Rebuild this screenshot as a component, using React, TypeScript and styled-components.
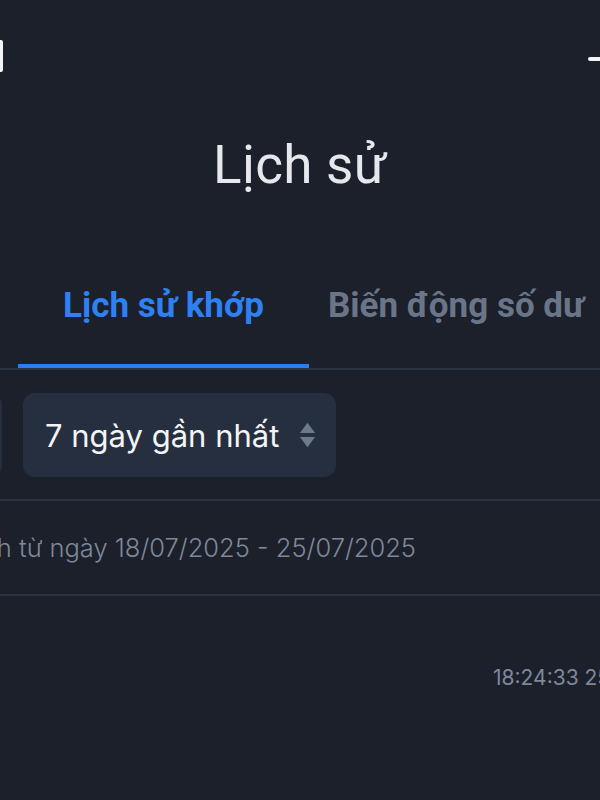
import styled, { createGlobalStyle } from 'styled-components';

const GlobalStyle = createGlobalStyle`
	html, body {
		margin: 0;
		padding: 0;
		background: #1b202b;
		overflow: hidden;
	}
`;

function App() {
	return (
		<>
			<GlobalStyle />
			<Screen>
				<TopBar>
					<BackEdge />
					<MenuEdge />
				</TopBar>
				<Title>Lịch sử</Title>
				<Tabs>
					<Tab active>Lịch sử khớp</Tab>
					<Tab>Biến động số dư</Tab>
				</Tabs>
				<FilterRow>
					<FilterBox />
					<Select>
						<span>7 ngày gần nhất</span>
						<SortIcon viewBox='0 0 18 28'>
							<path d='M9 1 L17 12 H1 Z' />
							<path d='M1 16 H17 L9 27 Z' />
						</SortIcon>
					</Select>
				</FilterRow>
				<DateLine>
					<span>Giao dịch từ ngày 18/07/2025 - 25/07/2025</span>
				</DateLine>
				<EntryRow>
					<Time>18:24:33 25/07/2025</Time>
				</EntryRow>
			</Screen>
		</>
	);
}

const Screen = styled.div`
	width: 600px;
	height: 800px;
	background: #1b202b;
	overflow: hidden;
	font-family: Roboto, 'Noto Sans', sans-serif;
`;

const TopBar = styled.div`
	height: 110px;
	display: flex;
	justify-content: space-between;
	align-items: flex-start;
`;

const BackEdge = styled.div`
	margin-top: 40px;
	width: 3px;
	height: 32px;
	background: #f2f3f5;
	border-radius: 0 2px 2px 0;
`;

const MenuEdge = styled.div`
	margin-top: 57px;
	width: 12px;
	height: 4px;
	background: #f2f3f5;
	border-radius: 2px 0 0 2px;
`;

const Title = styled.h1`
	margin: 0;
	height: 110px;
	text-align: center;
	font-size: 53px;
	font-weight: 400;
	line-height: 110px;
	color: #e6e8ec;
	letter-spacing: 0.3px;
`;

const Tabs = styled.div`
	display: flex;
	border-bottom: 2px solid #2b3242;
	padding-left: 18px;
`;

const Tab = styled.div<{ active?: boolean }>`
	width: ${(p) => (p.active ? '291px' : 'auto')};
	padding: 66px 0 0 ${(p) => (p.active ? '0' : '19px')};
	height: 148px;
	box-sizing: border-box;
	text-align: center;
	font-size: 35px;
	font-weight: 700;
	line-height: 40px;
	white-space: nowrap;
	color: ${(p) => (p.active ? '#2f80f2' : '#6b7588')};
	border-bottom: 4px solid ${(p) => (p.active ? '#2f7cf0' : 'transparent')};
`;

const FilterRow = styled.div`
	display: flex;
	gap: 21px;
	padding: 23px 0 22px;
	border-bottom: 2px solid #2b3242;
`;

const FilterBox = styled.div`
	margin-left: -100px;
	width: 102px;
	height: 84px;
	border-radius: 12px;
	background: #262f3f;
`;

const Select = styled.div`
	width: 313px;
	height: 84px;
	box-sizing: border-box;
	border-radius: 12px;
	background: #262f3f;
	display: flex;
	align-items: center;
	justify-content: space-between;
	padding: 0 20px 0 22px;
	font-family: Inter, Roboto, sans-serif;
	font-size: 31px;
	color: #f3f4f6;
`;

const SortIcon = styled.svg`
	width: 17px;
	height: 28px;
	fill: #6c7a8c;
`;

const DateLine = styled.div`
	width: 600px;
	height: 95px;
	box-sizing: border-box;
	padding-right: 184px;
	display: flex;
	align-items: center;
	justify-content: flex-end;
	overflow: hidden;
	white-space: nowrap;
	font-family: Inter, Roboto, sans-serif;
	font-size: 25.5px;
	font-weight: 300;
	color: #7f8899;
	border-bottom: 2px solid #2b3242;
`;

const EntryRow = styled.div`
	display: flex;
	padding: 69px 0 0 493px;
	white-space: nowrap;
`;

const Time = styled.span`
	font-family: Inter, Roboto, sans-serif;
	font-size: 21px;
	color: #7f8899;
`;

export default App;
